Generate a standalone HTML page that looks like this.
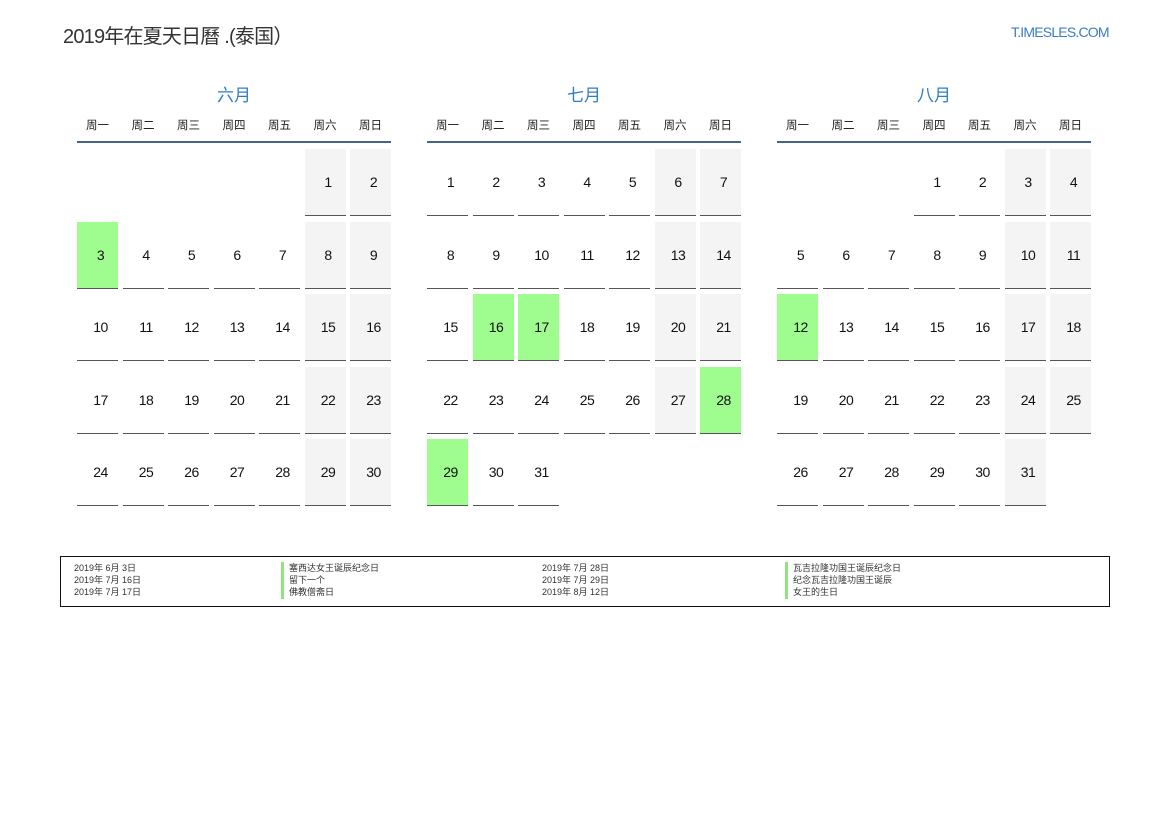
<!DOCTYPE html>
<html><head><meta charset="utf-8"><style>
*{margin:0;padding:0;box-sizing:border-box}
body{width:1169px;height:827px;background:#fff;position:relative;font-family:"Liberation Sans","Noto Sans CJK SC",sans-serif;color:#222;overflow:hidden}
.title{position:absolute;left:63px;top:20px;font-size:20px;color:#333;letter-spacing:-0.8px}
.logo{position:absolute;left:1011px;top:24px;font-size:14px;color:#3a7cc4;letter-spacing:-0.8px}
.m{position:absolute;top:84px;width:314px}
.mt{text-align:center;font-size:17px;color:#2e7dc8;height:28px;line-height:24px}
.wd{display:grid;grid-template-columns:repeat(7,41px);column-gap:4.5px;font-size:11.5px;text-align:center;height:31px;line-height:28px;border-bottom:2px solid #45648f}
.g{display:grid;grid-template-columns:repeat(7,41px);column-gap:4.5px;grid-auto-rows:67px;row-gap:5.5px;margin-top:6px}
.g div{border-bottom:1px solid #555;font-size:14px;text-align:center;line-height:66px;color:#111;padding-left:6px;letter-spacing:-0.5px}
.g .e{border:none}
.g .w{background:#f4f4f4}
.g .h{background:#9ffc8f}
.leg{position:absolute;left:60px;top:556px;width:1050px;height:51px;border:1px solid #111;font-size:9px;color:#333;line-height:12.2px}
.c{position:absolute;top:5px}
.b{border-left:3px solid #8ee57f;padding-left:5px}
</style></head><body>
<div class="title">2019年在夏天日曆 .(泰国）</div>
<div class="logo">T.IMESLES.COM</div>

<div class="m" style="left:77px">
<div class="mt">六月</div>
<div class="wd"><span>周一</span><span>周二</span><span>周三</span><span>周四</span><span>周五</span><span>周六</span><span>周日</span></div>
<div class="g">
<div class="e"></div><div class="e"></div><div class="e"></div><div class="e"></div><div class="e"></div><div class="w">1</div><div class="w">2</div>
<div class="h">3</div><div>4</div><div>5</div><div>6</div><div>7</div><div class="w">8</div><div class="w">9</div>
<div>10</div><div>11</div><div>12</div><div>13</div><div>14</div><div class="w">15</div><div class="w">16</div>
<div>17</div><div>18</div><div>19</div><div>20</div><div>21</div><div class="w">22</div><div class="w">23</div>
<div>24</div><div>25</div><div>26</div><div>27</div><div>28</div><div class="w">29</div><div class="w">30</div>
</div></div>

<div class="m" style="left:427px">
<div class="mt">七月</div>
<div class="wd"><span>周一</span><span>周二</span><span>周三</span><span>周四</span><span>周五</span><span>周六</span><span>周日</span></div>
<div class="g">
<div>1</div><div>2</div><div>3</div><div>4</div><div>5</div><div class="w">6</div><div class="w">7</div>
<div>8</div><div>9</div><div>10</div><div>11</div><div>12</div><div class="w">13</div><div class="w">14</div>
<div>15</div><div class="h">16</div><div class="h">17</div><div>18</div><div>19</div><div class="w">20</div><div class="w">21</div>
<div>22</div><div>23</div><div>24</div><div>25</div><div>26</div><div class="w">27</div><div class="h">28</div>
<div class="h">29</div><div>30</div><div>31</div><div class="e"></div><div class="e"></div><div class="e"></div><div class="e"></div>
</div></div>

<div class="m" style="left:777px">
<div class="mt">八月</div>
<div class="wd"><span>周一</span><span>周二</span><span>周三</span><span>周四</span><span>周五</span><span>周六</span><span>周日</span></div>
<div class="g">
<div class="e"></div><div class="e"></div><div class="e"></div><div>1</div><div>2</div><div class="w">3</div><div class="w">4</div>
<div>5</div><div>6</div><div>7</div><div>8</div><div>9</div><div class="w">10</div><div class="w">11</div>
<div class="h">12</div><div>13</div><div>14</div><div>15</div><div>16</div><div class="w">17</div><div class="w">18</div>
<div>19</div><div>20</div><div>21</div><div>22</div><div>23</div><div class="w">24</div><div class="w">25</div>
<div>26</div><div>27</div><div>28</div><div>29</div><div>30</div><div class="w">31</div><div class="e"></div>
</div></div>

<div class="leg">
<div class="c" style="left:13px">2019年 6月 3日<br>2019年 7月 16日<br>2019年 7月 17日</div>
<div class="c b" style="left:220px">塞西达女王诞辰纪念日<br>留下一个<br>佛教僧斋日</div>
<div class="c" style="left:481px">2019年 7月 28日<br>2019年 7月 29日<br>2019年 8月 12日</div>
<div class="c b" style="left:724px">瓦吉拉隆功国王诞辰纪念日<br>纪念瓦吉拉隆功国王诞辰<br>女王的生日</div>
</div>
</body></html>
